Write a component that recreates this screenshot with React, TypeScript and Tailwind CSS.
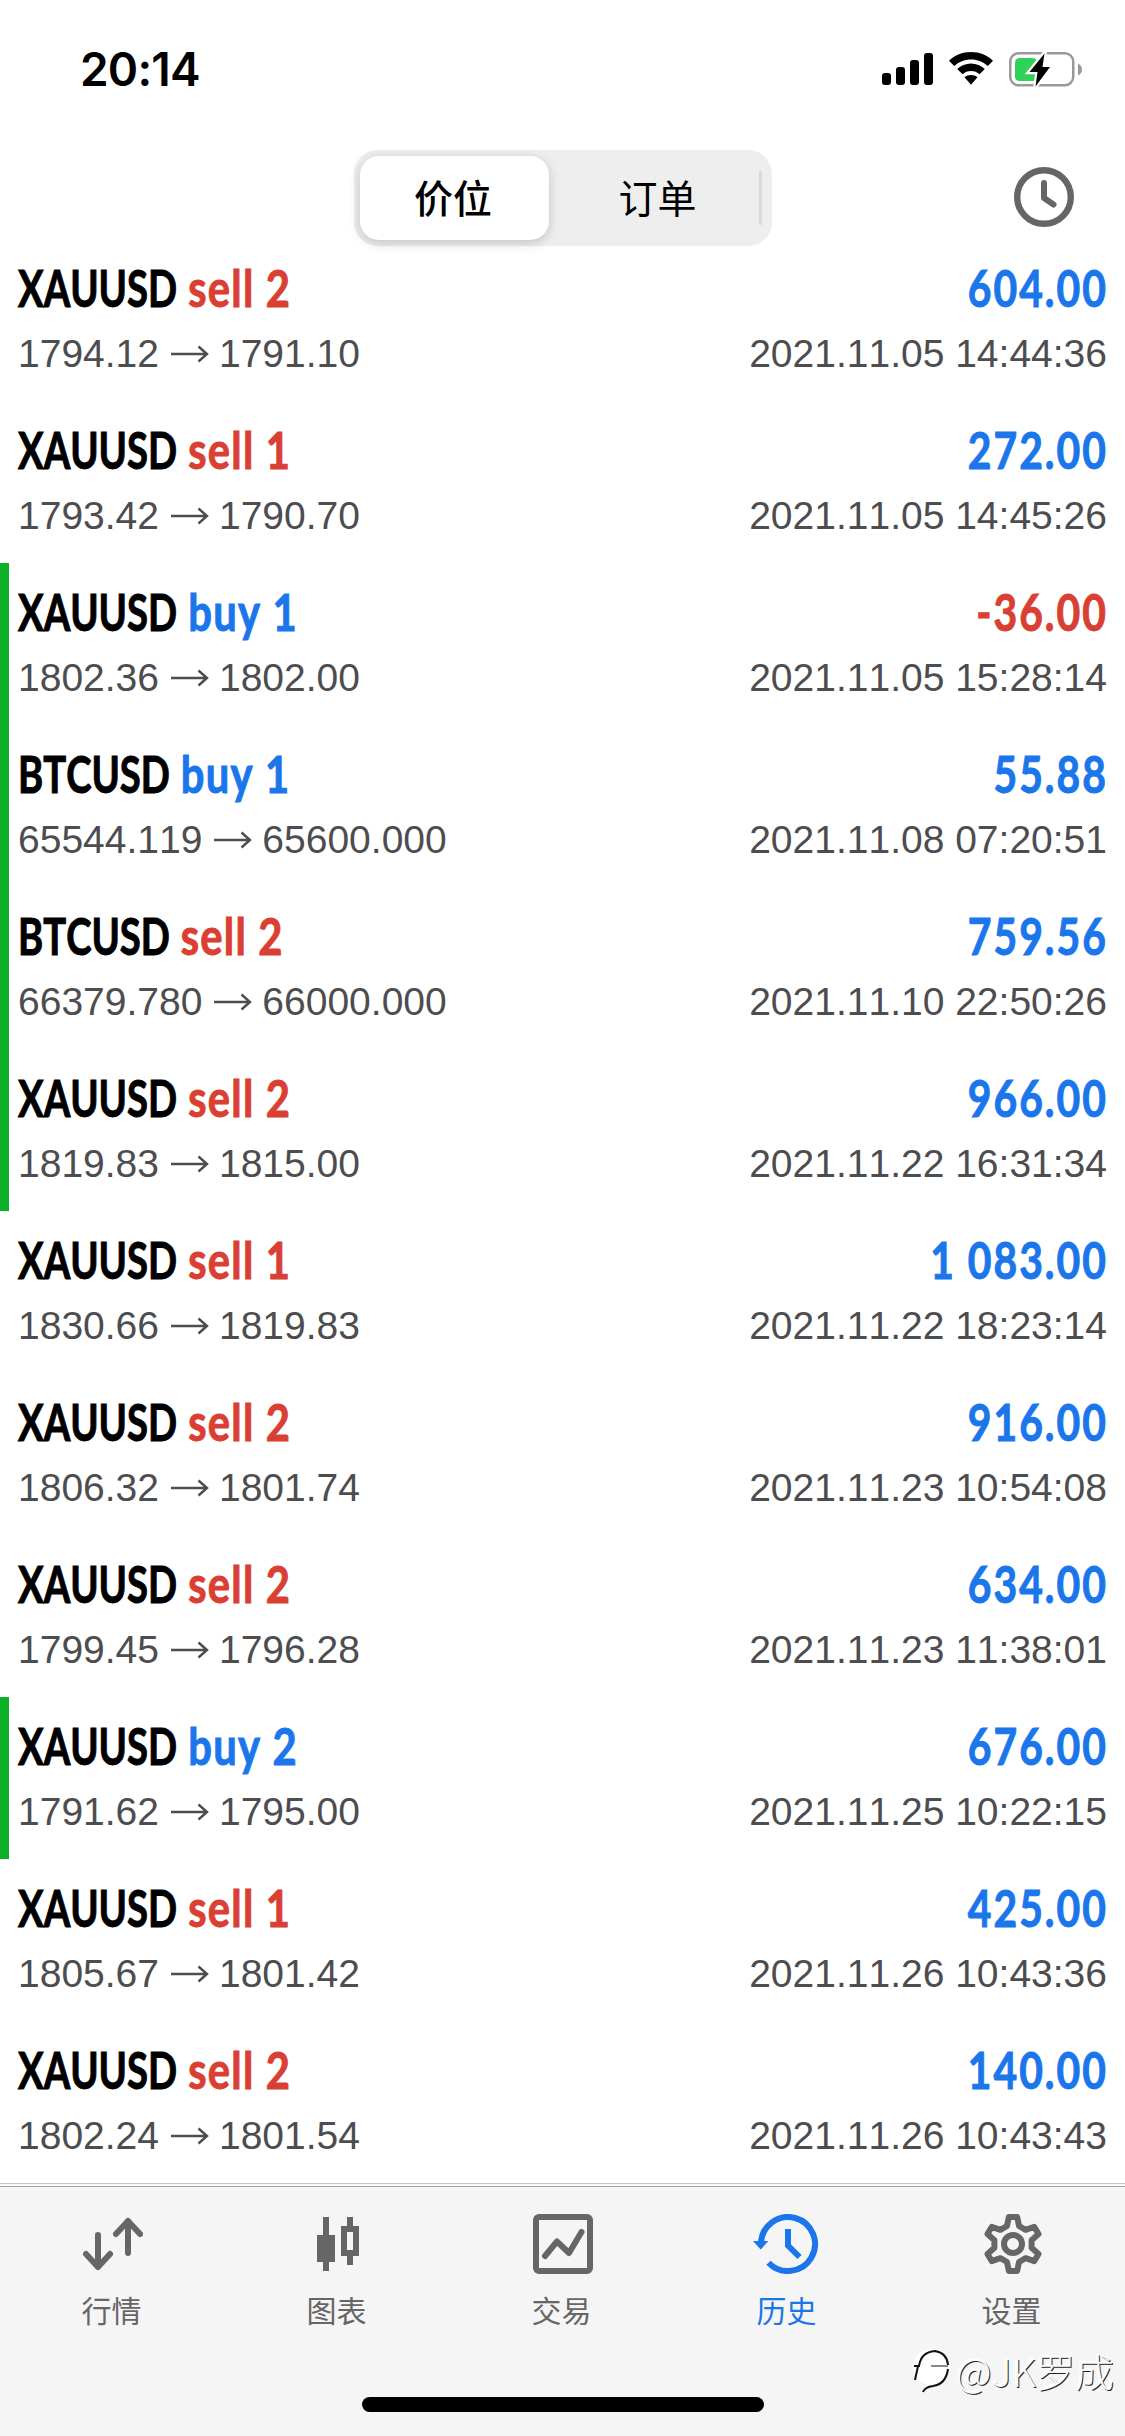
type Side = "buy" | "sell";

interface Deal {
  symbol: string;
  side: Side;
  volume: number;
  open: string;
  close: string;
  profit: string;
  time: string;
  marked?: boolean;
}

const DEALS: Deal[] = [
  { symbol: "XAUUSD", side: "sell", volume: 2, open: "1794.12", close: "1791.10", profit: "604.00", time: "2021.11.05 14:44:36" },
  { symbol: "XAUUSD", side: "sell", volume: 1, open: "1793.42", close: "1790.70", profit: "272.00", time: "2021.11.05 14:45:26" },
  { symbol: "XAUUSD", side: "buy", volume: 1, open: "1802.36", close: "1802.00", profit: "-36.00", time: "2021.11.05 15:28:14", marked: true },
  { symbol: "BTCUSD", side: "buy", volume: 1, open: "65544.119", close: "65600.000", profit: "55.88", time: "2021.11.08 07:20:51", marked: true },
  { symbol: "BTCUSD", side: "sell", volume: 2, open: "66379.780", close: "66000.000", profit: "759.56", time: "2021.11.10 22:50:26", marked: true },
  { symbol: "XAUUSD", side: "sell", volume: 2, open: "1819.83", close: "1815.00", profit: "966.00", time: "2021.11.22 16:31:34", marked: true },
  { symbol: "XAUUSD", side: "sell", volume: 1, open: "1830.66", close: "1819.83", profit: "1 083.00", time: "2021.11.22 18:23:14" },
  { symbol: "XAUUSD", side: "sell", volume: 2, open: "1806.32", close: "1801.74", profit: "916.00", time: "2021.11.23 10:54:08" },
  { symbol: "XAUUSD", side: "sell", volume: 2, open: "1799.45", close: "1796.28", profit: "634.00", time: "2021.11.23 11:38:01" },
  { symbol: "XAUUSD", side: "buy", volume: 2, open: "1791.62", close: "1795.00", profit: "676.00", time: "2021.11.25 10:22:15", marked: true },
  { symbol: "XAUUSD", side: "sell", volume: 1, open: "1805.67", close: "1801.42", profit: "425.00", time: "2021.11.26 10:43:36" },
  { symbol: "XAUUSD", side: "sell", volume: 2, open: "1802.24", close: "1801.54", profit: "140.00", time: "2021.11.26 10:43:43" },
];

function StatusBar() {
  return (
    <header className="flex h-[150px] items-start justify-between pt-[52px] pr-[43px] pl-[80px]">
      <p className="font-['Inter',sans-serif] text-[46px] leading-[34px] font-semibold tracking-[-0.8px]">20:14</p>
      <div className="flex items-start">
        <svg width="51" height="34" viewBox="0 0 51 34" className="mr-4">
          <rect x="0" y="21" width="9" height="12" rx="3" />
          <rect x="14" y="15" width="9" height="18" rx="3" />
          <rect x="28" y="8" width="9" height="25" rx="3" />
          <rect x="42" y="1" width="9" height="32" rx="3" />
        </svg>
        <svg width="44" height="34" viewBox="0 0 44 34" className="mr-4">
          <path d="M22 0C13.500 0 5.700 3.300 0 8.700L5.200 14C9.600 9.900 15.500 7.400 22 7.400S34.400 9.900 38.800 14L44 8.700C38.300 3.300 30.500 0 22 0Z" />
          <path d="M22 11.500C16.700 11.500 11.800 13.600 8.200 17L13.500 22.200C15.700 20.100 18.700 18.900 22 18.900S28.300 20.100 30.500 22.200L35.800 17C32.200 13.600 27.300 11.500 22 11.500Z" />
          <path d="M22 23C19.600 23 17.300 23.800 15.500 25.300L22 32.800L28.500 25.300C26.700 23.800 24.400 23 22 23Z" />
        </svg>
        <svg width="73" height="36" viewBox="0 0 73 36">
          <rect x="1.250" y="1.250" width="63" height="32" rx="8.500" fill="none" stroke="#999" strokeWidth="2.500" />
          <path d="M69 11.500Q73 13.500 73 17.500T69 23.500Z" fill="#999" />
          <rect x="6" y="6" width="22" height="23" rx="4.500" fill="#30d158" />
          <path d="M35.500 1.500L20.500 20H28.500L26.500 34.500L41 15H33.500Z" fill="#000" stroke="#fff" strokeWidth="4.500" paintOrder="stroke" />
        </svg>
      </div>
    </header>
  );
}

function Toolbar() {
  return (
    <div className="flex h-[89px] items-start">
      <div className="ml-[354px] flex h-24 w-[418px] items-center rounded-[24px] bg-[#eee] p-1.5 font-['Noto_Sans_CJK_SC',sans-serif] text-[39px]">
        <button className="flex h-[84px] w-[189px] items-center justify-center rounded-[19px] bg-white pr-[3px] pb-1 font-medium shadow-[0_3px_12px_rgba(0,0,0,0.18)]">
          价位
        </button>
        <button className="flex-1 pb-1 pl-[7px] font-normal">订单</button>
        <span className="mr-1 h-[54px] w-[3px] rounded-full bg-[#d9d9d9]" />
      </div>
      <svg width="60" height="60" viewBox="0 0 60 60" fill="none" stroke="#666" className="mt-[17px] ml-[242px]">
        <circle cx="30" cy="30" r="26.800" strokeWidth="6.400" />
        <path d="M30 16V31L39.500 37.500" strokeWidth="6" strokeLinecap="round" strokeLinejoin="round" />
      </svg>
    </div>
  );
}

function DealRow({ deal }: { deal: Deal }) {
  return (
    <li
      className={`flex h-[162px] justify-between border-l-[9px] pt-[19px] pr-[18px] pl-[9px] ${
        deal.marked ? "border-[#0cb128]" : "border-transparent"
      }`}
    >
      <div>
        <p className="h-[60px] origin-left scale-x-[0.75] font-['Lato',sans-serif] text-[51px] leading-[60px] font-bold whitespace-nowrap [-webkit-text-stroke:1px]">
          {deal.symbol}{" "}
          <span
            className={`ml-[2px] inline-block origin-left scale-x-[1.09] tracking-[1.5px] ${
              deal.side === "buy" ? "text-[#1a76ea]" : "text-[#d93f33]"
            }`}
          >
            {deal.side} {deal.volume}
          </span>
        </p>
        <p className="mt-[12px] flex items-center text-[39px] leading-[48px] text-[#4d4d50]">
          {deal.open}
          <svg width="39" height="20" viewBox="0 0 39 20" fill="none" stroke="currentColor" strokeWidth="2.400" className="mr-[10px] ml-[11px]">
            <path d="M1 10H37M28.500 2.500L37 10L28.500 17.500" />
          </svg>
          {deal.close}
        </p>
      </div>
      <div className="text-right">
        <p
          className={`-mr-px h-[60px] origin-right scale-x-[0.8] font-['Lato',sans-serif] text-[51px] leading-[60px] font-bold tracking-[2.5px] whitespace-nowrap [-webkit-text-stroke:1px] ${
            deal.profit.startsWith("-") ? "text-[#d93f33]" : "text-[#1a76ea]"
          }`}
        >
          {deal.profit}
        </p>
        <p className="mt-[12px] text-[39px] leading-[48px] text-[#4d4d50]">{deal.time}</p>
      </div>
    </li>
  );
}

function QuotesIcon() {
  return (
    <svg width="60" height="60" viewBox="0 0 60 60" fill="none" stroke="currentColor" strokeWidth="6" strokeLinecap="round" strokeLinejoin="round">
      <path d="M15 21V53M3 40L15 53L27 40M45 39V7M33 20L45 7L57 20" />
    </svg>
  );
}

function ChartIcon() {
  return (
    <svg width="60" height="60" viewBox="0 0 60 60" fill="currentColor">
      <path d="M15 3h6v18h6v27h-6v9h-6v-9H9V21h6z" />
      <path fillRule="evenodd" d="M39 3h6v9h6v30h-6v9h-6v-9h-6V12h6zM39 18v18h6V18z" />
    </svg>
  );
}

function TradeIcon() {
  return (
    <svg width="60" height="60" viewBox="0 0 60 60" fill="none" stroke="currentColor" strokeWidth="6" strokeLinecap="round" strokeLinejoin="round">
      <rect x="3" y="3" width="54" height="54" rx="3" />
      <path d="M12 42L24 27.500L36 39L48.500 18" />
    </svg>
  );
}

function HistoryIcon() {
  return (
    <svg width="70" height="60" viewBox="2 0 70 60" fill="none" stroke="currentColor" strokeWidth="6">
      <path d="M10 30A27 27 0 1 1 17.500 48.700" />
      <path d="M37 15V31.500L48.500 43" />
      <path d="M2 27H17.500L9.700 35.500Z" fill="currentColor" stroke="none" />
    </svg>
  );
}

function SettingsIcon() {
  return (
    <svg width="60" height="60" viewBox="-30 -30 60 60" fill="none" stroke="currentColor" strokeWidth="6" strokeLinejoin="round">
      <circle r="9" />
      <path d="M-6-18L-4.200-27H4.200L6-18L12.600-14.200L21.300-17.100L25.500-9.900L18.600-3.800V3.800L25.500 9.900L21.300 17.100L12.600 14.200L6 18L4.200 27H-4.200L-6 18L-12.600 14.200L-21.300 17.100L-25.500 9.900L-18.600 3.800V-3.800L-25.500-9.900L-21.300-17.100L-12.600-14.200Z" />
    </svg>
  );
}

const TABS = [
  { label: "行情", icon: <QuotesIcon /> },
  { label: "图表", icon: <ChartIcon /> },
  { label: "交易", icon: <TradeIcon /> },
  { label: "历史", icon: <HistoryIcon />, active: true },
  { label: "设置", icon: <SettingsIcon /> },
];

function TabBar() {
  return (
    <nav className="relative h-[253px] border-t border-[#c6c6c6] bg-[#f5f5f5]">
      <div className="border-t-2 border-[#fafafa]">
        <div className="grid grid-cols-5 border-t border-[#a3a3a3] pt-[27px]">
          {TABS.map((tab) => (
            <button
              key={tab.label}
              className={`flex flex-col items-center font-['Noto_Sans_CJK_SC',sans-serif] text-[30px] leading-[42px] ${
                tab.active ? "text-[#1a76ea]" : "text-[#666]"
              }`}
            >
              <span className="mb-3.5 flex h-[60px] items-center justify-center">{tab.icon}</span>
              <span className="pr-0.5">{tab.label}</span>
            </button>
          ))}
        </div>
      </div>
      {/* home indicator */}
      <div className="absolute bottom-6 left-[362px] h-[15px] w-[402px] rounded-full bg-black" />
      {/* author mark */}
      <div className="absolute right-[11px] bottom-[38px] flex items-center font-['Noto_Sans_CJK_SC',sans-serif] text-[39px] leading-[56px] font-light text-[#fafafa] [text-shadow:1px_1px_0_#222,-1px_-1px_0_#fff]">
        <svg width="46" height="48" viewBox="0 0 46 48" fill="none" stroke="#111" strokeWidth="2">
          <path d="M21 3A17 17 0 1 0 21 39A18 18 0 0 0 21 3Z" fill="#fff" stroke="none" />
          <path d="M4 20H9Q11 6 25 5Q37 7 38 19M38 23Q36 38 23 40Q15 41 13 46M8 20L5 34" />
          <path d="M21 20H38" strokeWidth="1" />
        </svg>
        @JK罗成
      </div>
    </nav>
  );
}

export default function App() {
  return (
    <main className="h-[2436px] w-[1125px] overflow-hidden bg-white font-['Liberation_Sans',Arial,sans-serif] text-black [font-kerning:none]">
      <StatusBar />
      <Toolbar />
      <ul>
        {DEALS.map((deal) => (
          <DealRow key={deal.time} deal={deal} />
        ))}
      </ul>
      <TabBar />
    </main>
  );
}
